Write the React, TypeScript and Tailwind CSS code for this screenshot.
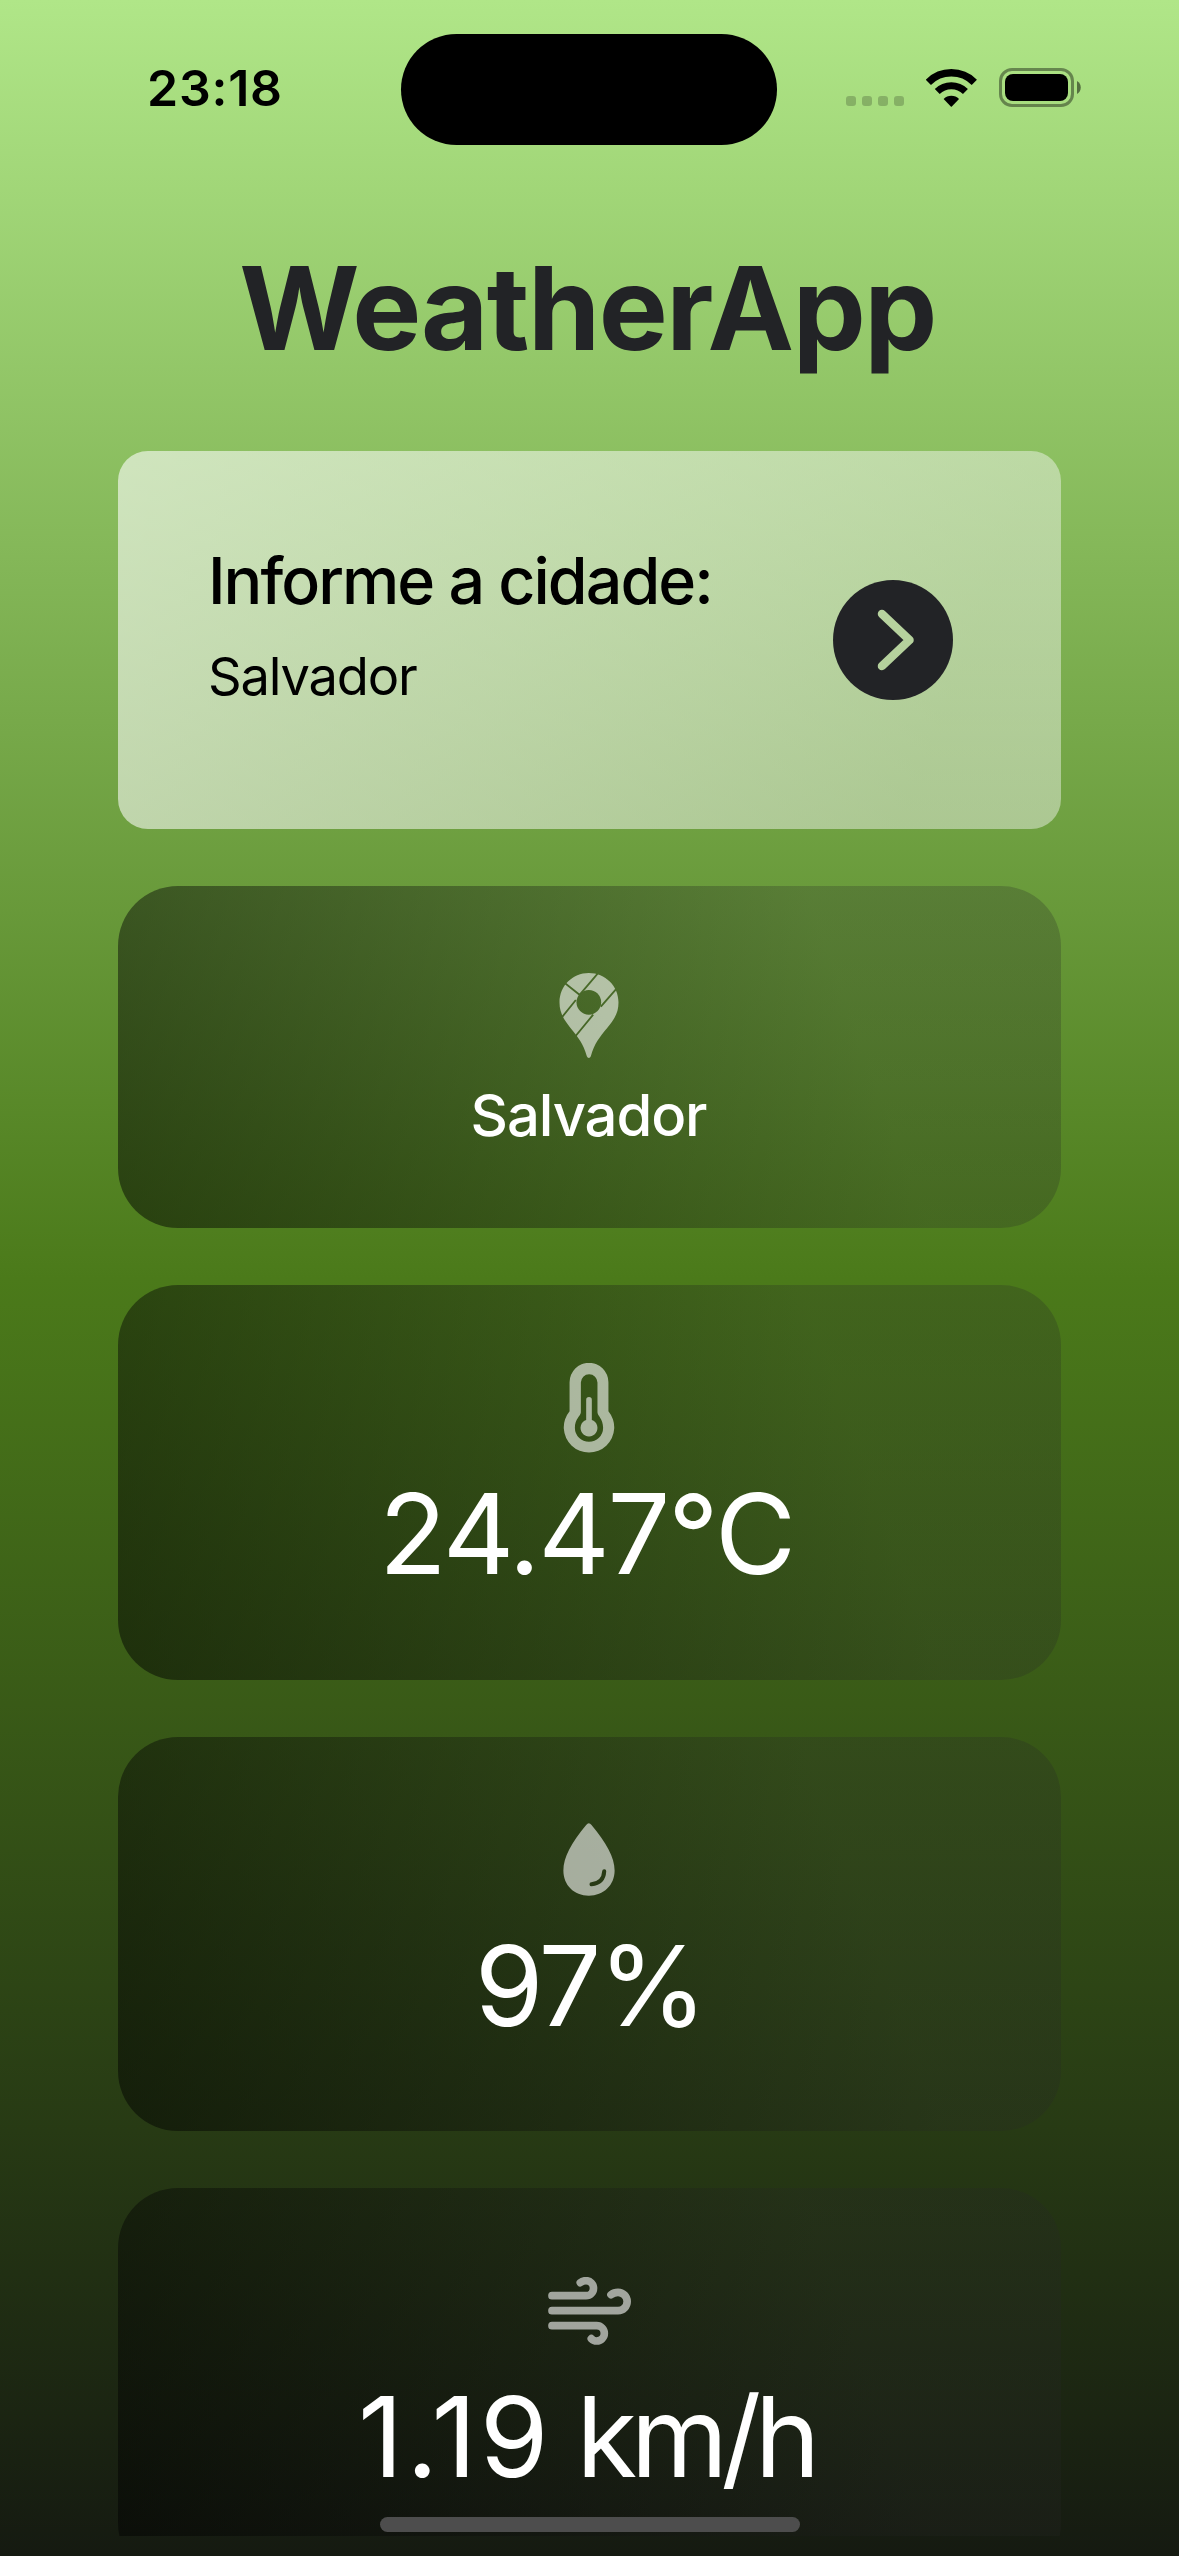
import type { ReactNode } from 'react';

function WifiIcon() {
  return (
    <svg className="h-[38px] w-[51px]" viewBox="379 86 152 113" fill="none">
      <path d="M386 125.5 A97 97 0 0 1 523 125.5" stroke="#000" strokeWidth="22" />
      <path d="M412.500 153 A60 60 0 0 1 496.500 153" stroke="#000" strokeWidth="21" />
      <path d="M431.500 175 A33 33 0 0 1 477.500 175 L456 197.500 Q454.500 199 453 197.500 Z" fill="#000" />
    </svg>
  );
}

function Battery() {
  return (
    <div className="flex items-center gap-[3px]">
      <div className="h-[39px] w-[75px] rounded-[13px] border-[3px] border-black/40 p-[3px]">
        <div className="h-full w-full rounded-[8px] bg-black" />
      </div>
      <svg className="h-[13px] w-[4px]" viewBox="0 0 4 13">
        <path d="M0 0 C5 2.500 5 10.500 0 13 Z" fill="#000" fillOpacity="0.5" />
      </svg>
    </div>
  );
}

function StatusBar() {
  return (
    <header className="flex h-[177px] shrink-0 items-center">
      <div className="ml-[147px] h-[177px] w-[254px] text-[50px] font-semibold leading-[176px] tracking-[0.76px] text-black">
        23:18
      </div>
      <div className="mt-px h-[111px] w-[376px] rounded-full bg-black" />
      <div className="mb-[2px] ml-[69px] flex h-[39px] items-center">
        <div className="flex gap-[6px] pt-[27px]">
          <span className="size-[10px] rounded-[3px] bg-black/20" />
          <span className="size-[10px] rounded-[3px] bg-black/20" />
          <span className="size-[10px] rounded-[3px] bg-black/20" />
          <span className="size-[10px] rounded-[3px] bg-black/20" />
        </div>
        <div className="ml-[22px] mr-[22px]">
          <WifiIcon />
        </div>
        <Battery />
      </div>
    </header>
  );
}

function PinIcon() {
  return (
    <svg className="mr-px h-[85px] w-[60px]" viewBox="118 69 179 255">
      <defs>
        <mask id="pin-cuts" maskUnits="userSpaceOnUse" x="100" y="50" width="220" height="290">
          <rect x="100" y="50" width="220" height="290" fill="#fff" />
          <circle cx="207" cy="157" r="37" fill="#000" />
          <path
            d="M241 62 L178 136 M168 150 L118 212 M130 95 L180 135 M296 109 L243 170 M220 194 L160 267"
            stroke="#000"
            strokeWidth="5.5"
          />
        </mask>
      </defs>
      <path
        mask="url(#pin-cuts)"
        fill="#fff"
        fillOpacity="0.59"
        d="M207 69 C158 69 119 108 119 157 C119 188 131 207 152 234 C176 264 190 280 201 319 Q203 324 207 324 Q211 324 213 319 C224 280 239 262 262 234 C285 206 296 188 296 157 C296 108 256 69 207 69 Z"
      />
    </svg>
  );
}

function ThermometerIcon() {
  return (
    <svg className="h-[90px] w-[52px]" viewBox="130 69 155 271" fill="#fff" fillOpacity="0.59">
      <path
        fillRule="evenodd"
        d="M149 127 A58.500 58.500 0 0 1 266 127 V214 A76 76 0 1 1 149 214 Z M183 128 V217 C183 228 165 236 165 264 A42.500 42.500 0 0 0 250 264 C250 236 233 228 233 217 V128 A25 25 0 0 0 183 128 Z"
      />
      <path d="M199 180 A8.500 8.500 0 0 1 216 180 V240.500 A25.500 25.500 0 1 1 199 240.500 Z" />
    </svg>
  );
}

function DropIcon() {
  return (
    <svg className="h-[73px] w-[52px]" viewBox="130 70 155 218">
      <defs>
        <mask id="drop-cut" maskUnits="userSpaceOnUse" x="120" y="60" width="180" height="240">
          <rect x="120" y="60" width="180" height="240" fill="#fff" />
          <path d="M253 214 Q251 250 215 253" fill="none" stroke="#000" strokeWidth="12" strokeLinecap="round" />
        </mask>
      </defs>
      <path
        mask="url(#drop-cut)"
        fill="#fff"
        fillOpacity="0.59"
        d="M207 71 Q203 71 199 76 C155 130 131 172 131 212 C131 256 163 287 207 287 C251 287 284 256 284 212 C284 172 259 130 215 76 Q211 71 207 71 Z"
      />
    </svg>
  );
}

function WindIcon() {
  return (
    <svg className="h-[68px] w-[83px]" viewBox="83 82 249 204" fill="none">
      <g stroke="#fff" strokeWidth="23" strokeLinecap="round" opacity="0.59">
        <path d="M95 138 H197 A22.500 22.500 0 0 0 197 93 Q187 93 180 99" />
        <path d="M95 183 H293 A27.500 27.500 0 0 0 293 128 Q281 128 272 135" />
        <path d="M95 228 H229 A23 23 0 0 1 229 274 Q220 274 213 267" />
      </g>
    </svg>
  );
}

function SearchButton() {
  return (
    <button type="button" aria-label="Buscar" className="size-[120px]">
      <svg className="size-[120px]" viewBox="0 0 120 120">
        <defs>
          <mask id="chevron-cut">
            <rect width="120" height="120" fill="#fff" />
            <path
              d="M49 34 L76.500 60 L49 86"
              fill="none"
              stroke="#000"
              strokeWidth="8.500"
              strokeLinecap="round"
              strokeLinejoin="round"
            />
          </mask>
        </defs>
        <circle cx="60" cy="60" r="60" fill="#222326" mask="url(#chevron-cut)" />
      </svg>
    </button>
  );
}

function Metric({ icon, children }: { icon: ReactNode; children: ReactNode }) {
  return (
    <section className="flex h-[394.5px] shrink-0 flex-col items-center rounded-[60px] bg-linear-[70deg,rgba(0,0,0,0.49),rgba(38,38,38,0.25)_76%] pt-[78px]">
      <div className="flex h-[90px] items-center pr-px">{icon}</div>
      <div className="mt-[21px] whitespace-nowrap text-[111px] leading-[120px] text-white">{children}</div>
    </section>
  );
}

export default function App() {
  return (
    <div className="relative flex h-[2556px] w-[1179px] flex-col overflow-hidden bg-linear-[180deg,#b0e688,#4b7a1a_50%,#151a11] font-['Inter',sans-serif]">
      <StatusBar />
      <main className="flex h-[2359px] shrink-0 flex-col gap-[57px] overflow-hidden px-[118px]">
        <h1 className="-mb-[45px] h-[262px] shrink-0 whitespace-nowrap pr-[4px] text-center text-[116px] font-bold leading-[262px] tracking-[-1.5px] text-[#222326]">
          WeatherApp
        </h1>

        <section className="flex h-[378px] shrink-0 items-center justify-between rounded-[30px] bg-linear-[112deg,rgba(255,255,255,0.59),rgba(250,250,250,0.44)_85%] pl-[90px] pr-[108px]">
          <div className="flex flex-col gap-[15px] pb-[24px] text-black">
            <label className="whitespace-nowrap text-[64.5px] font-medium leading-[80px] tracking-[-1.97px]">
              Informe a cidade:
            </label>
            <div className="text-[52.5px] leading-[80px] tracking-[-1.2px]">Salvador</div>
          </div>
          <SearchButton />
        </section>

        <section className="flex h-[342px] shrink-0 flex-col items-center gap-[22px] rounded-[60px] bg-linear-[70deg,rgba(0,0,0,0.49),rgba(38,38,38,0.25)_76%] pt-[87px]">
          <PinIcon />
          <div className="pr-[2px] text-[58px] font-medium leading-[70px] tracking-[-1.1px] text-white">
            Salvador
          </div>
        </section>

        <Metric icon={<ThermometerIcon />}>
          <span className="pr-[6px] tracking-[-2.29px]">24.47°C</span>
        </Metric>
        <Metric icon={<DropIcon />}>
          <span className="tracking-[-3px]">97%</span>
        </Metric>
        <Metric icon={<WindIcon />}>
          <span className="tracking-[3px]">1.19</span>
          <span className="pr-[7px] tracking-[-6.5px]"> km/h</span>
        </Metric>
      </main>
      <div className="absolute bottom-[24px] left-[380px] h-[15px] w-[420px] rounded-full bg-[#4d4d4d]" />
    </div>
  );
}
